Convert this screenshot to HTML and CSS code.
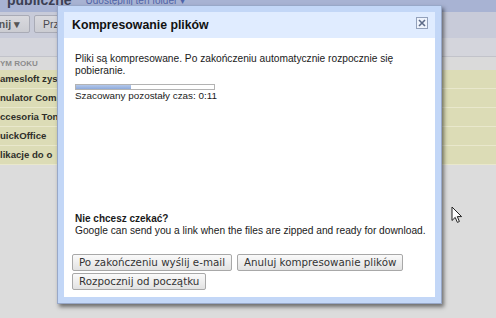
FILE: index.html
```html
<!DOCTYPE html>
<html lang="pl">
<head>
  <meta charset="UTF-8" />
  <title>Kompresowanie plików</title>
  <link rel="stylesheet" href="styles.css">
</head>
<body>
  <div class="page">
    <div class="topbar">
      <span class="folder-name">publiczne</span>
      <a class="share">Udostępnij ten folder ▾</a>
    </div>
    <div class="toolbar">
      <span class="tb-btn first">nij ▾</span>
      <span class="tb-btn">Prz</span>
    </div>
    <div class="subbar"></div>
    <div class="list-head">YM ROKU</div>
    <ul class="rows">
      <li>amesloft zys</li>
      <li>nulator Com</li>
      <li>ccesoria Ton</li>
      <li>uickOffice</li>
      <li>likacje do o</li>
    </ul>
  </div>

  <div class="dialog">
    <div class="dlg-head">
      <span class="dlg-title">Kompresowanie plików</span>
      <span class="dlg-close">
        <svg width="8" height="8" viewBox="0 0 8 8"><path d="M1 1 L7 7 M7 1 L1 7" stroke="#5d6b88" stroke-width="1.6"/></svg>
      </span>
    </div>
    <div class="dlg-body">
      <p class="msg">Pliki są kompresowane. Po zakończeniu automatycznie rozpocznie się<br>pobieranie.</p>
      <div class="progress"><div class="progress-fill" style="width: 40%"></div></div>
      <p class="eta">Szacowany pozostały czas: 0:11</p>
      <div class="wait">
        <p class="wait-title">Nie chcesz czekać?</p>
        <p class="msg">Google can send you a link when the files are zipped and ready for download.</p>
      </div>
      <div class="actions">
        <button>Po zakończeniu wyślij e-mail</button>
        <button>Anuluj kompresowanie plików</button>
        <button>Rozpocznij od początku</button>
      </div>
    </div>
  </div>

  <svg class="cursor" width="12" height="18" viewBox="0 0 12 18">
    <path d="M1 1 L1 14.5 L4.2 11.4 L6.4 16.4 L8.4 15.5 L6.3 10.6 L10.6 10.6 Z" fill="#fff" stroke="#222" stroke-width="1" stroke-linejoin="round"/>
  </svg>
</body>
</html>
```

FILE: styles.css
```css
html, body { margin: 0; padding: 0; }
body { width: 496px; height: 318px; overflow: hidden; background: #dcdcdc; font-family: "Liberation Sans", Arial, sans-serif; position: relative; }

.page { width: 100%; }
.topbar { height: 12px; background: #a8b3d3; display: flex; overflow: hidden; }
.folder-name { font-size: 14px; line-height: 14px; font-weight: bold; color: #3b4054; margin: -7px 0 0 7px; }
.share { font-size: 10px; line-height: 10px; color: #5064a8; margin: -4px 0 0 14px; }

.toolbar { height: 26px; background: #c8cbd9; display: flex; align-items: flex-start; gap: 4px; padding-top: 3px; box-sizing: border-box; }
.tb-btn { height: 18px; box-sizing: border-box; border: 1px solid #a9abb6; border-radius: 2px; background: linear-gradient(#d9d9de, #cbccd2); font-size: 10.5px; line-height: 16px; color: #4a4a50; padding: 0 8px; }
.tb-btn.first { margin-left: -3px; padding: 0 9px 0 0; width: 33px; text-align: right; font-weight: bold; color: #555; }

.subbar { height: 18px; background: #d4d5dc; border-bottom: 1px solid #c2c3ca; }
.list-head { height: 13px; background: #dadada; font-size: 8px; font-weight: bold; color: #8c8c8c; line-height: 14px; }

.rows { list-style: none; margin: 0; padding: 0; }
.rows li { height: 18px; line-height: 18px; background: #dcdcb6; border-bottom: 1px solid #e9e8cc; font-size: 9.6px; font-weight: bold; color: #2f2f2a; white-space: nowrap; }

.dialog { position: absolute; left: 57px; top: 5px; width: 371px; height: 285px; padding: 6px; border: 1px solid #98a8c8; background: #c3d7f7; box-shadow: 2px 3px 4px rgba(0, 0, 0, 0.5); }
.dlg-head { height: 26px; background: #e0ecff; display: flex; justify-content: space-between; align-items: center; padding: 0 7px 0 8px; }
.dlg-title { font-size: 12.3px; font-weight: bold; color: #111; }
.dlg-close { width: 12px; height: 12px; box-sizing: border-box; border: 1px solid #93a1bb; background: #eef3fc; display: flex; align-items: center; justify-content: center; align-self: flex-start; margin-top: 5px; }

.dlg-body { height: 259px; box-sizing: border-box; background: #fff; padding: 15px 4px 7px 8px; display: flex; flex-direction: column; color: #1a1a1a; }
.dlg-body p { margin: 0; }
.msg, .eta, .wait-title { font-size: 10.2px; line-height: 12px; padding-left: 3px; white-space: nowrap; }
.eta { font-size: 9.9px; margin-top: 1px; }
.wait-title { font-weight: bold; font-size: 10px; }

.progress { margin: 7px 0 0 3px; width: 140px; height: 6px; box-sizing: border-box; border: 1px solid #b3b3b3; background: #fff; }
.progress-fill { height: 100%; background: linear-gradient(#b4c8ea, #8eaadb); }

.wait { margin-top: auto; }
.actions { margin-top: 17px; display: flex; flex-wrap: wrap; column-gap: 5px; row-gap: 2px; }
.actions button { height: 17px; padding: 0 6px; font-family: "DejaVu Sans", sans-serif; font-size: 10.3px; line-height: 15px; color: #333; border: 1px solid #a8a8a8; border-radius: 2px; background: linear-gradient(#fafafa, #e2e2e2); }

.cursor { position: absolute; left: 451px; top: 206px; }
```
